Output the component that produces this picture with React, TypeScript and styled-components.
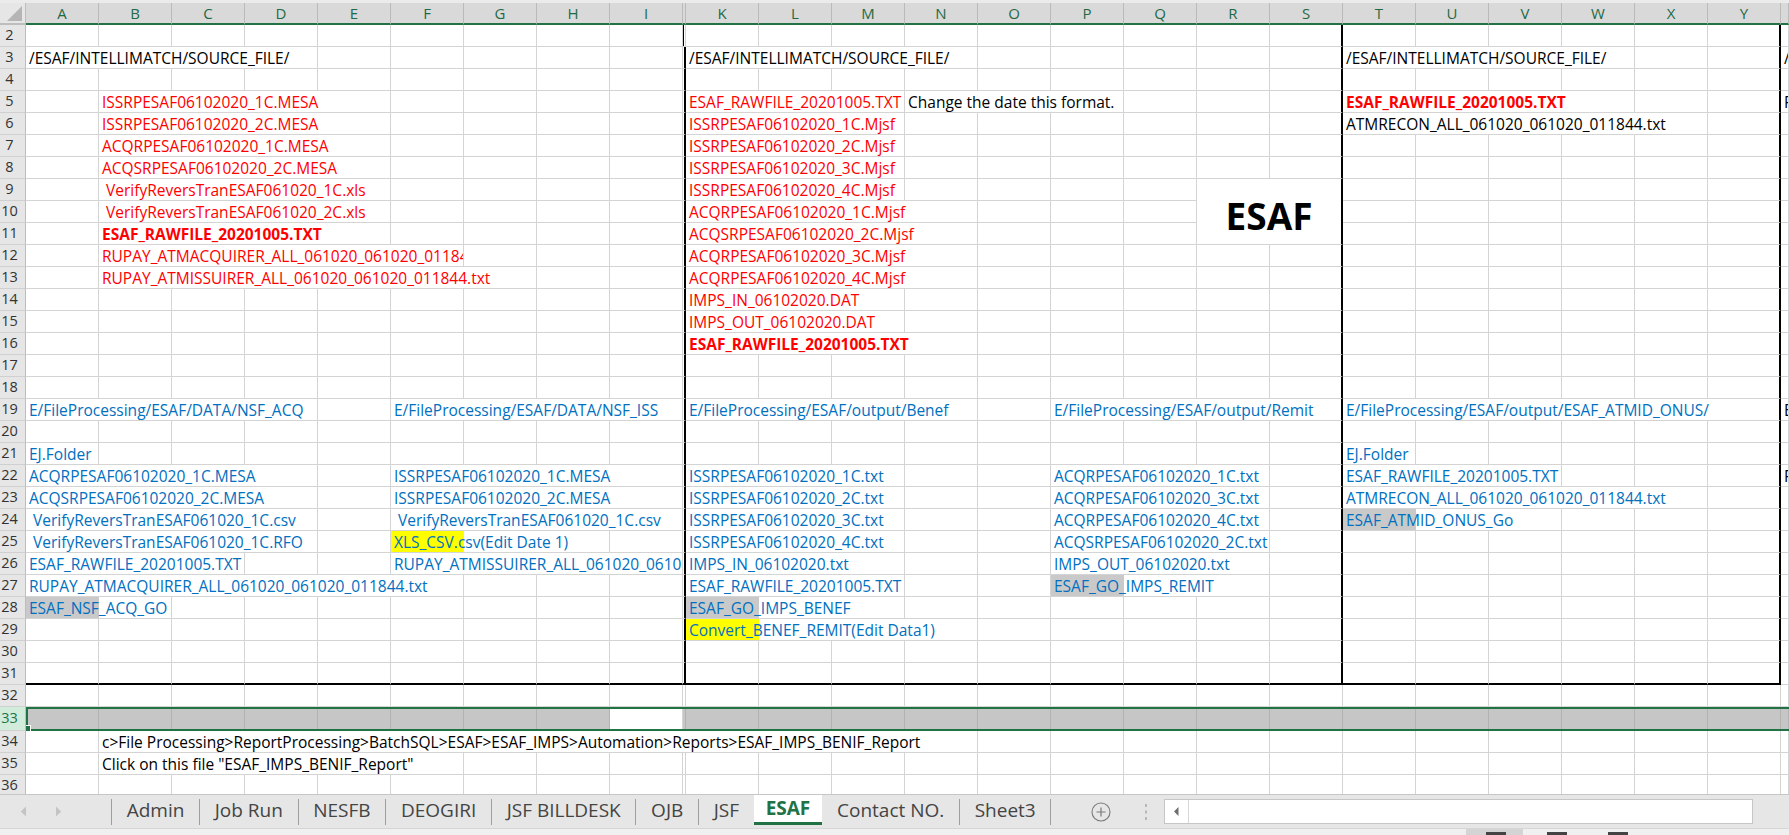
import React, { useMemo } from "react";
import styled, { createGlobalStyle, css } from "styled-components";

const GlobalStyle = createGlobalStyle`
  html, body {
    margin: 0;
    padding: 0;
    height: 100%;
    overflow: hidden;
    background: #ffffff;
  }
  #root {
    height: 100%;
  }
`;

const FONT = `"Open Sans", "Liberation Sans", Arial, sans-serif`;
const CELL_SIZE = 15.5;
const GREEN = "#217346";
const GRID = "#d4d4d4";
const SEL = "#c6c6c6";
const SEL_GRID = "#b2b2b2";

const COLS = "ABCDEFGHIJKLMNOPQRSTUVWXYZ".split("");
const COL_W = COLS.map((c) => (c === "J" ? 3 : c === "Z" ? 8 : 73));
const at = (c: string) => COLS.indexOf(c);

type Tone = "black" | "red" | "blue";
type Fill = "gray" | "yellow";
type Edge = "grid" | "thick";

type Item = {
  row: number;
  col: string;
  text: string;
  tone?: Tone;
  bold?: boolean;
  fill?: Fill;
  stop?: string;
};

const TONES: Record<Tone, string> = {
  black: "#000000",
  red: "#ff0000",
  blue: "#0070c0",
};

const FILLS: Record<Fill, string> = {
  gray: "#c9c9c9",
  yellow: "#ffff00",
};

const SRC = "/ESAF/INTELLIMATCH/SOURCE_FILE/";
const RAW = "ESAF_RAWFILE_20201005.TXT";

const ITEMS: Item[] = [
  { row: 3, col: "A", text: SRC },
  { row: 3, col: "K", text: SRC },
  { row: 3, col: "T", text: SRC },
  { row: 3, col: "Z", text: SRC },

  { row: 5, col: "B", text: "ISSRPESAF06102020_1C.MESA", tone: "red" },
  { row: 5, col: "K", text: RAW, tone: "red" },
  { row: 5, col: "N", text: "Change the date this format." },
  { row: 5, col: "T", text: RAW, tone: "red", bold: true },
  { row: 5, col: "Z", text: "F" },

  { row: 6, col: "B", text: "ISSRPESAF06102020_2C.MESA", tone: "red" },
  { row: 6, col: "K", text: "ISSRPESAF06102020_1C.Mjsf", tone: "red" },
  { row: 6, col: "T", text: "ATMRECON_ALL_061020_061020_011844.txt" },

  { row: 7, col: "B", text: "ACQRPESAF06102020_1C.MESA", tone: "red" },
  { row: 7, col: "K", text: "ISSRPESAF06102020_2C.Mjsf", tone: "red" },

  { row: 8, col: "B", text: "ACQSRPESAF06102020_2C.MESA", tone: "red" },
  { row: 8, col: "K", text: "ISSRPESAF06102020_3C.Mjsf", tone: "red" },

  { row: 9, col: "B", text: " VerifyReversTranESAF061020_1C.xls", tone: "red" },
  { row: 9, col: "K", text: "ISSRPESAF06102020_4C.Mjsf", tone: "red" },

  { row: 10, col: "B", text: " VerifyReversTranESAF061020_2C.xls", tone: "red" },
  { row: 10, col: "K", text: "ACQRPESAF06102020_1C.Mjsf", tone: "red" },

  { row: 11, col: "B", text: RAW, tone: "red", bold: true },
  { row: 11, col: "K", text: "ACQSRPESAF06102020_2C.Mjsf", tone: "red" },

  { row: 12, col: "B", text: "RUPAY_ATMACQUIRER_ALL_061020_061020_011844.txt", tone: "red", stop: "G" },
  { row: 12, col: "K", text: "ACQRPESAF06102020_3C.Mjsf", tone: "red" },

  { row: 13, col: "B", text: "RUPAY_ATMISSUIRER_ALL_061020_061020_011844.txt", tone: "red" },
  { row: 13, col: "K", text: "ACQRPESAF06102020_4C.Mjsf", tone: "red" },

  { row: 14, col: "K", text: "IMPS_IN_06102020.DAT", tone: "red" },
  { row: 15, col: "K", text: "IMPS_OUT_06102020.DAT", tone: "red" },
  { row: 16, col: "K", text: RAW, tone: "red", bold: true },

  { row: 19, col: "A", text: "E/FileProcessing/ESAF/DATA/NSF_ACQ", tone: "blue" },
  { row: 19, col: "F", text: "E/FileProcessing/ESAF/DATA/NSF_ISS", tone: "blue" },
  { row: 19, col: "K", text: "E/FileProcessing/ESAF/output/Benef", tone: "blue" },
  { row: 19, col: "P", text: "E/FileProcessing/ESAF/output/Remit", tone: "blue" },
  { row: 19, col: "T", text: "E/FileProcessing/ESAF/output/ESAF_ATMID_ONUS/", tone: "blue" },
  { row: 19, col: "Z", text: "E" },

  { row: 21, col: "A", text: "EJ.Folder", tone: "blue" },
  { row: 21, col: "T", text: "EJ.Folder", tone: "blue" },

  { row: 22, col: "A", text: "ACQRPESAF06102020_1C.MESA", tone: "blue" },
  { row: 22, col: "F", text: "ISSRPESAF06102020_1C.MESA", tone: "blue" },
  { row: 22, col: "K", text: "ISSRPESAF06102020_1C.txt", tone: "blue" },
  { row: 22, col: "P", text: "ACQRPESAF06102020_1C.txt", tone: "blue" },
  { row: 22, col: "T", text: RAW, tone: "blue" },
  { row: 22, col: "Z", text: "F" },

  { row: 23, col: "A", text: "ACQSRPESAF06102020_2C.MESA", tone: "blue" },
  { row: 23, col: "F", text: "ISSRPESAF06102020_2C.MESA", tone: "blue" },
  { row: 23, col: "K", text: "ISSRPESAF06102020_2C.txt", tone: "blue" },
  { row: 23, col: "P", text: "ACQRPESAF06102020_3C.txt", tone: "blue" },
  { row: 23, col: "T", text: "ATMRECON_ALL_061020_061020_011844.txt", tone: "blue" },

  { row: 24, col: "A", text: " VerifyReversTranESAF061020_1C.csv", tone: "blue" },
  { row: 24, col: "F", text: " VerifyReversTranESAF061020_1C.csv", tone: "blue" },
  { row: 24, col: "K", text: "ISSRPESAF06102020_3C.txt", tone: "blue" },
  { row: 24, col: "P", text: "ACQRPESAF06102020_4C.txt", tone: "blue" },
  { row: 24, col: "T", text: "ESAF_ATMID_ONUS_Go", tone: "blue", fill: "gray" },

  { row: 25, col: "A", text: " VerifyReversTranESAF061020_1C.RFO", tone: "blue" },
  { row: 25, col: "F", text: "XLS_CSV.csv(Edit Date 1)", tone: "blue", fill: "yellow" },
  { row: 25, col: "K", text: "ISSRPESAF06102020_4C.txt", tone: "blue" },
  { row: 25, col: "P", text: "ACQSRPESAF06102020_2C.txt", tone: "blue" },

  { row: 26, col: "A", text: RAW, tone: "blue" },
  { row: 26, col: "F", text: "RUPAY_ATMISSUIRER_ALL_061020_061020_011844.txt", tone: "blue", stop: "J" },
  { row: 26, col: "K", text: "IMPS_IN_06102020.txt", tone: "blue" },
  { row: 26, col: "P", text: "IMPS_OUT_06102020.txt", tone: "blue" },

  { row: 27, col: "A", text: "RUPAY_ATMACQUIRER_ALL_061020_061020_011844.txt", tone: "blue" },
  { row: 27, col: "K", text: RAW, tone: "blue" },
  { row: 27, col: "P", text: "ESAF_GO_IMPS_REMIT", tone: "blue", fill: "gray" },

  { row: 28, col: "A", text: "ESAF_NSF_ACQ_GO", tone: "blue", fill: "gray" },
  { row: 28, col: "K", text: "ESAF_GO_IMPS_BENEF", tone: "blue", fill: "gray" },

  { row: 29, col: "K", text: "Convert_BENEF_REMIT(Edit Data1)", tone: "blue", fill: "yellow" },

  {
    row: 34,
    col: "B",
    text: "c>File Processing>ReportProcessing>BatchSQL>ESAF>ESAF_IMPS>Automation>Reports>ESAF_IMPS_BENIF_Report",
  },
  { row: 35, col: "B", text: 'Click on this file "ESAF_IMPS_BENIF_Report"' },
];

// merged block holding the big title
const BANNER = { row: 9, rows: 3, col: "R", cols: 2, text: "ESAF" };

const bannerCovers = (r: number, c: number) =>
  r >= BANNER.row &&
  r < BANNER.row + BANNER.rows &&
  c >= at(BANNER.col) &&
  c < at(BANNER.col) + BANNER.cols;

const TABS = ["Admin", "Job Run", "NESFB", "DEOGIRI", "JSF BILLDESK", "OJB", "JSF", "ESAF", "Contact NO.", "Sheet3"];
const ACTIVE = "ESAF";

let ctx: CanvasRenderingContext2D | null = null;
const textWidth = (text: string, bold: boolean) => {
  if (!ctx) ctx = document.createElement("canvas").getContext("2d");
  if (!ctx) return text.length * 9;
  ctx.font = `${bold ? "700" : "400"} ${CELL_SIZE}px "Open Sans"`;
  return ctx.measureText(text).width;
};

/* ---------- layout ---------- */

const Screen = styled.div`
  height: 100vh;
  display: flex;
  flex-direction: column;
  overflow: hidden;
  background: #ffffff;
`;

const TopStrip = styled.div`
  flex: none;
  height: 3px;
  background: #ebebeb;
`;

const Sheet = styled.div`
  flex: 1;
  min-height: 0;
  overflow: hidden;
  display: grid;
  grid-template-columns: 26px repeat(9, 73px) 3px repeat(15, 73px) 1fr;
  grid-template-rows: repeat(32, 22px) 24px repeat(3, 22px);
`;

const Corner = styled.div`
  grid-row: 1;
  grid-column: 1;
  box-sizing: border-box;
  background: #e6e6e6;
  border-right: 1px solid #bdbdbd;
  border-bottom: 2px solid #bdbdbd;
  display: flex;
  align-items: flex-end;
  justify-content: flex-end;
  padding: 0 3px 2px 0;
`;

const ColHead = styled.div<{ $col: number }>`
  grid-row: 1;
  grid-column: ${(p) => p.$col};
  box-sizing: border-box;
  min-width: 0;
  overflow: hidden;
  background: #d9d9d9;
  border-right: 1px solid #bababa;
  border-bottom: 2px solid ${GREEN};
  display: flex;
  align-items: center;
  justify-content: center;
  font: 400 15px/1 ${FONT};
  color: #1f6a45;
`;

const RowHead = styled.div<{ $row: number; $sel?: boolean }>`
  grid-row: ${(p) => p.$row};
  grid-column: 1;
  box-sizing: border-box;
  background: ${(p) => (p.$sel ? "#d2ecdb" : "#e6e6e6")};
  border-right: 1px solid #bdbdbd;
  border-bottom: 1px solid #d0d0d0;
  display: flex;
  align-items: center;
  justify-content: center;
  padding-right: 6px;
  font: 400 14.5px/1 ${FONT};
  color: ${(p) => (p.$sel ? GREEN : "#333333")};
`;

const edge = (e: Edge, sel: boolean) =>
  e === "thick" ? "2px solid #000000" : `1px solid ${sel ? SEL_GRID : GRID}`;

const Cell = styled.div<{
  $row: number;
  $col: number;
  $span: number;
  $right: Edge;
  $bottom: Edge;
  $tone: Tone;
  $bold?: boolean;
  $fill?: string;
  $sel: boolean;
}>`
  grid-row: ${(p) => p.$row};
  grid-column: ${(p) => p.$col} / span ${(p) => p.$span};
  box-sizing: border-box;
  min-width: 0;
  overflow: hidden;
  white-space: pre;
  padding: 2px 0 0 3px;
  font: ${(p) => (p.$bold ? 700 : 400)} ${CELL_SIZE}px/19px ${FONT};
  color: ${(p) => TONES[p.$tone]};
  border-right: ${(p) => edge(p.$right, p.$sel)};
  border-bottom: ${(p) => edge(p.$bottom, p.$sel)};
  ${(p) =>
    p.$sel
      ? css`
          background: ${SEL};
        `
      : p.$fill
      ? css`
          background: linear-gradient(${p.$fill}, ${p.$fill}) 0 0 / 73px 100% no-repeat;
        `
      : ""}
`;

const Gap = styled.div<{ $row: number; $line: "left" | "right" | "none"; $bottom: Edge; $sel: boolean }>`
  grid-row: ${(p) => p.$row};
  grid-column: ${at("J") + 2};
  box-sizing: border-box;
  border-bottom: ${(p) => edge(p.$bottom, p.$sel)};
  border-right: ${(p) => (p.$line === "right" ? "2px solid #000000" : `1px solid ${p.$sel ? SEL_GRID : GRID}`)};
  background: ${(p) =>
    p.$line === "left"
      ? "linear-gradient(to right, #000000 1.5px, transparent 1.5px)"
      : p.$sel
      ? SEL
      : "transparent"};
`;

const Banner = styled.div`
  grid-row: ${BANNER.row} / span ${BANNER.rows};
  grid-column: ${at(BANNER.col) + 2} / span ${BANNER.cols};
  box-sizing: border-box;
  border-right: 2px solid #000000;
  border-bottom: 1px solid ${GRID};
  display: flex;
  align-items: center;
  justify-content: center;
  padding-top: 8px;
  font: 700 37px/1 ${FONT};
  color: #000000;
`;

const Selection = styled.div`
  grid-row: 33;
  grid-column: 2 / -1;
  z-index: 2;
  position: relative;
  pointer-events: none;
  border: 2px solid ${GREEN};
  border-right: 0;
`;

const FillHandle = styled.span`
  position: absolute;
  left: -2px;
  bottom: -3px;
  width: 4px;
  height: 5px;
  background: ${GREEN};
  border: 1px solid #ffffff;
  border-left: 0;
`;

/* ---------- sheet tabs ---------- */

const TabBar = styled.div`
  flex: none;
  height: 34px;
  box-sizing: border-box;
  display: flex;
  align-items: stretch;
  background: #e6e6e6;
  border-top: 1px solid #c6c6c6;
`;

const Arrows = styled.div`
  flex: none;
  width: 111px;
  box-sizing: border-box;
  display: flex;
  align-items: center;
  gap: 28px;
  padding-left: 20px;
`;

const Divider = styled.span`
  flex: none;
  align-self: center;
  width: 1px;
  height: 26px;
  background: #9f9f9f;
`;

const Tab = styled.div<{ $active?: boolean }>`
  display: flex;
  align-items: center;
  padding: 0 14.7px 2px;
  white-space: nowrap;
  font: ${(p) => (p.$active ? 700 : 400)} 19px/1 ${FONT};
  color: ${(p) => (p.$active ? GREEN : "#444444")};
  ${(p) =>
    p.$active &&
    css`
      background: #ffffff;
      border-bottom: 3px solid ${GREEN};
      margin-bottom: 3px;
      padding: 0 12px;
    `}
`;

const AddSheet = styled.div`
  flex: none;
  align-self: center;
  margin-left: 40px;
  display: flex;
`;

const More = styled.div`
  flex: none;
  align-self: center;
  margin-left: 33px;
  display: flex;
`;

const Scroll = styled.div`
  flex: none;
  align-self: center;
  margin-left: 16px;
  width: 589px;
  height: 25px;
  box-sizing: border-box;
  background: #ffffff;
  border: 1px solid #c6c6c6;
  display: flex;
  align-items: center;
`;

const ScrollArrow = styled.div`
  width: 24px;
  height: 100%;
  box-sizing: border-box;
  border-right: 1px solid #d8d8d8;
  display: flex;
  align-items: center;
  justify-content: center;
`;

const StatusBar = styled.div`
  flex: none;
  height: 7px;
  box-sizing: border-box;
  background: #f0f0f0;
  border-top: 1px solid #d6d6d6;
  display: flex;
  justify-content: flex-end;
  gap: 4px;
  padding-right: 144px;
`;

const ViewButton = styled.div<{ $on?: boolean }>`
  width: 57px;
  display: flex;
  align-items: flex-end;
  justify-content: center;
  background: ${(p) => (p.$on ? "#d4d4d4" : "transparent")};
`;

const ViewGlyph = styled.span`
  width: 20px;
  height: 3px;
  margin-left: 3px;
  background: #444444;
`;

/* ---------- building the grid ---------- */

function buildRow(r: number): React.ReactNode[] {
  const inRow = ITEMS.filter((i) => i.row === r);
  const starts = new Map(inRow.map((i) => [at(i.col), i] as [number, Item]));
  const sel = r === 33;
  const framed = r >= 2 && r <= 31;
  const out: React.ReactNode[] = [];

  for (let c = 0; c < COLS.length; ) {
    if (bannerCovers(r, c)) {
      c++;
      continue;
    }
    const bottom: Edge = r === 31 && COLS[c] !== "Z" ? "thick" : "grid";
    const it = starts.get(c);

    if (!it && COLS[c] === "J") {
      out.push(
        <Gap
          key={`${r}-J`}
          $row={r}
          $line={r === 2 ? "left" : framed ? "right" : "none"}
          $bottom={bottom}
          $sel={sel}
        />
      );
      c++;
      continue;
    }

    let span = 1;
    if (it) {
      let limit = it.stop ? at(it.stop) : COLS.length;
      for (let k = c + 1; k < limit; k++) {
        if (starts.has(k) || bannerCovers(r, k)) {
          limit = k;
          break;
        }
      }
      const need = textWidth(it.text, !!it.bold) + 5;
      let acc = 0;
      span = 0;
      while (c + span < limit) {
        acc += COL_W[c + span];
        span++;
        if (acc >= need) break;
      }
      span = Math.max(1, span);
    }
    const end = COLS[c + span - 1];
    const right: Edge = framed && (end === "S" || end === "Y") ? "thick" : "grid";

    out.push(
      <Cell
        key={`${r}-${COLS[c]}`}
        $row={r}
        $col={c + 2}
        $span={span}
        $right={right}
        $bottom={bottom}
        $tone={it?.tone ?? "black"}
        $bold={it?.bold}
        $fill={it?.fill ? FILLS[it.fill] : undefined}
        $sel={sel && COLS[c] !== "I"}
      >
        {it?.text}
      </Cell>
    );
    c += span;
  }
  return out;
}

const Triangle = ({ dir }: { dir: "left" | "right" }) => (
  <svg width="7" height="11" viewBox="0 0 7 11">
    <path d={dir === "left" ? "M6 0.5 L0.8 5.5 L6 10.5 Z" : "M1 0.5 L6.2 5.5 L1 10.5 Z"} fill="#c4c4c4" />
  </svg>
);

export default function App() {
  const rows = useMemo(() => {
    const list: React.ReactNode[] = [];
    for (let r = 2; r <= 36; r++) {
      list.push(
        <RowHead key={`h${r}`} $row={r} $sel={r === 33}>
          {r}
        </RowHead>
      );
      list.push(...buildRow(r));
    }
    return list;
  }, []);

  return (
    <Screen>
      <GlobalStyle />
      <TopStrip />
      <Sheet>
        <Corner>
          <svg width="15" height="15" viewBox="0 0 15 15">
            <path d="M15 0 L15 15 L0 15 Z" fill="#b5b5b5" />
          </svg>
        </Corner>
        {COLS.map((c, i) => (
          <ColHead key={c} $col={i + 2}>
            {c === "J" || c === "Z" ? "" : c}
          </ColHead>
        ))}
        {rows}
        <Banner>{BANNER.text}</Banner>
        <Selection>
          <FillHandle />
        </Selection>
      </Sheet>

      <TabBar>
        <Arrows>
          <Triangle dir="left" />
          <Triangle dir="right" />
        </Arrows>
        <Divider />
        {TABS.map((t, i) => {
          const active = t === ACTIVE;
          const beforeActive = TABS[i + 1] === ACTIVE;
          return (
            <React.Fragment key={t}>
              <Tab $active={active}>{t}</Tab>
              {!active && !beforeActive && <Divider />}
            </React.Fragment>
          );
        })}
        <AddSheet>
          <svg width="20" height="20" viewBox="0 0 20 20">
            <circle cx="10" cy="10" r="9" fill="none" stroke="#7a7a7a" strokeWidth="1.1" />
            <path d="M10 5.5 V14.5 M5.5 10 H14.5" stroke="#7a7a7a" strokeWidth="1.2" />
          </svg>
        </AddSheet>
        <More>
          <svg width="4" height="18" viewBox="0 0 4 18">
            <rect x="1" y="1" width="2" height="3" fill="#b8b8b8" />
            <rect x="1" y="7.5" width="2" height="3" fill="#b8b8b8" />
            <rect x="1" y="14" width="2" height="3" fill="#b8b8b8" />
          </svg>
        </More>
        <Scroll>
          <ScrollArrow>
            <svg width="5" height="9" viewBox="0 0 5 9">
              <path d="M4.5 0 L0 4.5 L4.5 9 Z" fill="#6e6e6e" />
            </svg>
          </ScrollArrow>
        </Scroll>
      </TabBar>

      <StatusBar>
        <ViewButton $on>
          <ViewGlyph />
        </ViewButton>
        <ViewButton>
          <ViewGlyph />
        </ViewButton>
        <ViewButton>
          <ViewGlyph />
        </ViewButton>
      </StatusBar>
    </Screen>
  );
}
